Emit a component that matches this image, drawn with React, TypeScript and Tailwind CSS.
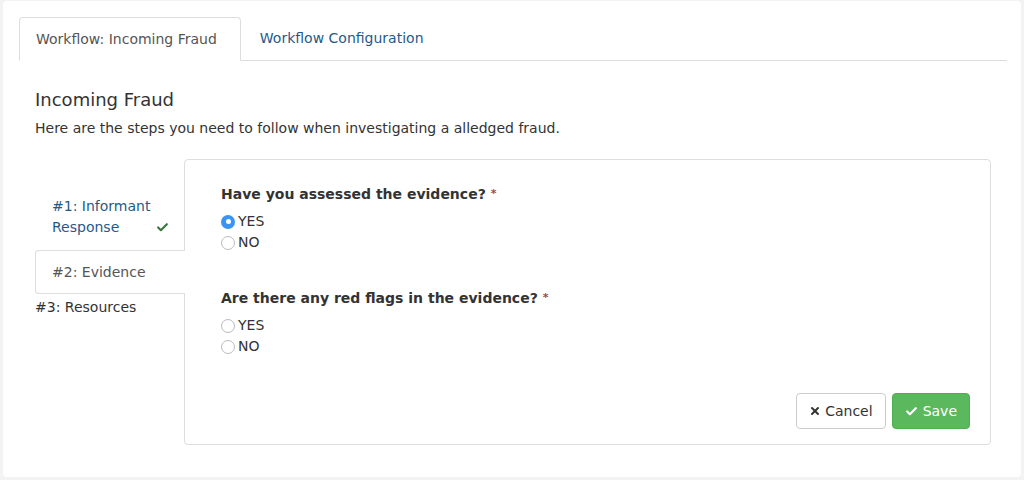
import { Check, X } from 'lucide-react';

const Radio = ({ checked, label }: { checked?: boolean; label: string }) => (
    <label className="flex items-center h-[21px] text-[14px] text-[#333]">
        <span
            className={`w-[14px] h-[14px] rounded-full flex items-center justify-center mr-[3px] ${
                checked ? 'bg-[#3b94f2]' : 'border border-[#bbb] bg-white'
            }`}
        >
            {checked && <span className="w-[5px] h-[5px] rounded-full bg-white" />}
        </span>
        {label}
    </label>
);

const Question = ({ text, first }: { text: string; first?: boolean }) => (
    <div className={first ? '' : 'mt-[35px]'}>
        <div className="text-[14px] font-semibold text-[#333] mb-[7px] leading-[20px]">
            {text} <span className="text-[#a94442] text-[11px] align-top">*</span>
        </div>
        <Radio checked={first} label="YES" />
        <Radio label="NO" />
    </div>
);

export default function App() {
    return (
        <div className="w-[1024px] h-[480px] bg-[#f3f3f3] pt-[1px] px-[3px] font-['DejaVu_Sans',sans-serif]">
            <div className="h-[476px] bg-white rounded-[4px] pt-[16px] pl-[16px] pr-[14px]">
                <div className="flex border-b border-[#ddd] text-[14px] h-[44px]">
                    <div className="pl-[16px] pr-[23px] h-[44px] flex items-center border border-[#ddd] border-b-white rounded-t-[4px] bg-white text-[#555] -mb-[1px]">
                        Workflow: Incoming Fraud
                    </div>
                    <div className="px-[19px] h-[43px] flex items-center text-[#1f5a8a]">
                        Workflow Configuration
                    </div>
                </div>

                <div className="pl-[16px] pr-[16px]">
                    <h2 className="text-[18px] text-[#333] mt-[27px] leading-[24px]">Incoming Fraud</h2>
                    <p className="text-[14px] text-[#333] mt-[6px] leading-[20px]">
                        Here are the steps you need to follow when investigating a alledged fraud.
                    </p>

                    <div className="flex mt-[21px]">
                        <div className="w-[149px] pt-[37px] text-[14px]">
                            <div className="pl-[17px] pr-[15px] pb-[12px] flex items-end justify-between text-[#1f5a8a] leading-[21px]">
                                <span>
                                    #1: Informant
                                    <br />
                                    Response
                                </span>
                                <Check className="w-[13px] h-[13px] text-[#3c763d] mb-[4px]" strokeWidth={4} />
                            </div>
                            <div className="h-[44px] border border-r-0 border-[#ddd] rounded-l-[4px] flex items-center pl-[16px] text-[#555] bg-white relative z-10 -mr-[1px]">
                                #2: Evidence
                            </div>
                            <div className="mt-[3px] text-[#333] leading-[20px]">#3: Resources</div>
                        </div>

                        <div className="flex-1 h-[286px] border border-[#ddd] rounded-[4px] pl-[36px] pr-[20px] pt-[24px] flex flex-col">
                            <Question text="Have you assessed the evidence?" first />
                            <Question text="Are there any red flags in the evidence?" />
                            <div className="mt-auto mb-[15px] flex justify-end gap-[6px]">
                                <button className="h-[36px] px-[12px] flex items-center gap-[4px] border border-[#ccc] rounded-[4px] bg-white text-[14px] text-[#333]">
                                    <X className="w-[12px] h-[12px]" strokeWidth={4} />
                                    Cancel
                                </button>
                                <button className="h-[36px] px-[12px] flex items-center gap-[5px] border border-[#4cae4c] rounded-[4px] bg-[#5cb85c] text-[14px] text-white">
                                    <Check className="w-[13px] h-[13px]" strokeWidth={4} />
                                    Save
                                </button>
                            </div>
                        </div>
                    </div>
                </div>
            </div>
        </div>
    );
}
